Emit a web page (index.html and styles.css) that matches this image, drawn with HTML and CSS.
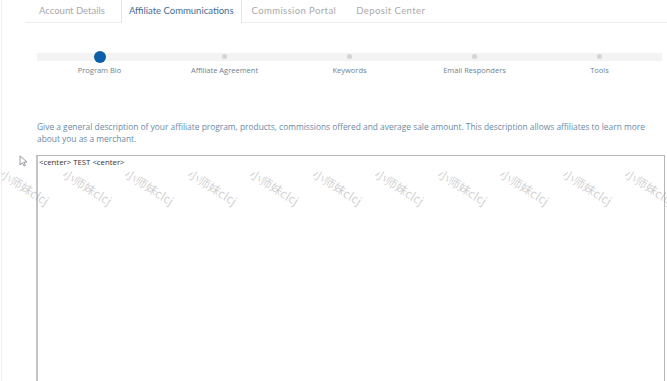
FILE: index.html
```html
<!DOCTYPE html>
<html lang="en">
<head>
<meta charset="UTF-8">
<meta name="viewport" content="width=device-width, initial-scale=1.0">
<title>Affiliate Communications</title>
<link rel="stylesheet" href="styles.css">
</head>
<body>
  <div class="page">
    <ul class="tabs">
      <li class="tab">Account Details</li>
      <li class="tab active">Affiliate Communications</li>
      <li class="tab">Commission Portal</li>
      <li class="tab">Deposit Center</li>
    </ul>

    <div class="steps">
      <div class="step current"><span class="dot"></span><span class="label">Program Bio</span></div>
      <div class="step"><span class="dot"></span><span class="label">Affiliate Agreement</span></div>
      <div class="step"><span class="dot"></span><span class="label">Keywords</span></div>
      <div class="step"><span class="dot"></span><span class="label">Email Responders</span></div>
      <div class="step"><span class="dot"></span><span class="label">Tools</span></div>
    </div>

    <p class="intro">Give a general description of your affiliate program, products, commissions offered and average sale amount. This description allows affiliates to learn more about you as a merchant.</p>

    <div class="editor">
      <textarea class="bio" readonly>&lt;center&gt; TEST &lt;center&gt;</textarea>
    </div>

    <svg class="cursor" width="9" height="12" viewBox="0 0 9 12">
      <path d="M1 1 L1 10 L3.4 7.8 L5 11 L6.4 10.3 L4.8 7.2 L8 7 Z" fill="#fff" stroke="#8a8f96" stroke-width="0.9" stroke-linejoin="round"/>
    </svg>

    <div class="watermarks">
      <span>小师妹clcj</span><span>小师妹clcj</span><span>小师妹clcj</span><span>小师妹clcj</span>
      <span>小师妹clcj</span><span>小师妹clcj</span><span>小师妹clcj</span><span>小师妹clcj</span>
      <span>小师妹clcj</span><span>小师妹clcj</span><span>小师妹clcj</span>
    </div>
  </div>
</body>
</html>
```

FILE: styles.css
```css
body {
  margin: 0;
  background: #fff;
  font-family: "Open Sans", Arial, sans-serif;
}
.page {
  position: relative;
  height: 381px;
  overflow: hidden;
  border-left: 1px solid #ededed;
  margin-left: 1px;
}
.tabs {
  display: flex;
  list-style: none;
  margin: 0 0 0 23px;
  padding: 0;
  height: 22px;
  border-bottom: 1px solid #ececec;
}
.tab {
  font-family: "Lato", Arial, sans-serif;
  font-size: 9.5px;
  color: #a9a9a9;
  padding: 0 10px;
  line-height: 22px;
  letter-spacing: 0.4px;
}
.tab:first-child {
  padding: 0 16px 0 14px;
  letter-spacing: 0;
}
.tab.active {
  color: #3f6d99;
  background: #fff;
  border-left: 1px solid #e6e6e6;
  border-right: 1px solid #e6e6e6;
  height: 23px;
  padding: 0 7px;
  letter-spacing: 0;
}
.steps {
  display: flex;
  margin: 26px 5px 0 35px;
  background: linear-gradient(#f3f3f3, #f3f3f3) no-repeat 0 4px / 100% 8px;
}
.step {
  flex: 1;
  display: flex;
  flex-direction: column;
  align-items: center;
}
.dot {
  width: 5px;
  height: 5px;
  border-radius: 50%;
  background: #d4d4d4;
  margin: 5px 0 6px;
}
.step.current .dot {
  width: 12px;
  height: 12px;
  background: #0c5ea8;
  margin: 2px 0 2px;
}
.label {
  font-size: 7.5px;
  color: #6f7f8f;
  line-height: 10px;
}
.intro {
  margin: 46px 10px 0 35px;
  font-size: 8.4px;
  line-height: 12px;
  color: #6a8aa6;
}
.editor {
  margin: 10px 2px 0 34px;
}
.bio {
  display: block;
  box-sizing: border-box;
  width: 100%;
  height: 240px;
  margin: 0;
  padding: 1px 1px;
  border: 1px solid #b5b5b5;
  border-left: 2px solid #c4c4c4;
  font-family: "Open Sans", Arial, sans-serif;
  font-size: 7.8px;
  color: #333;
  resize: none;
  outline: none;
}
.cursor {
  position: absolute;
  left: 17px;
  top: 155px;
}
.watermarks {
  position: absolute;
  left: 4px;
  top: 165px;
  display: flex;
  pointer-events: none;
}
.watermarks span {
  width: 62.5px;
  flex: none;
  transform: rotate(32deg);
  transform-origin: 0 0;
  font-family: "Noto Sans CJK SC", sans-serif;
  font-size: 12px;
  color: rgba(150, 150, 150, 0.45);
  white-space: nowrap;
}
```
